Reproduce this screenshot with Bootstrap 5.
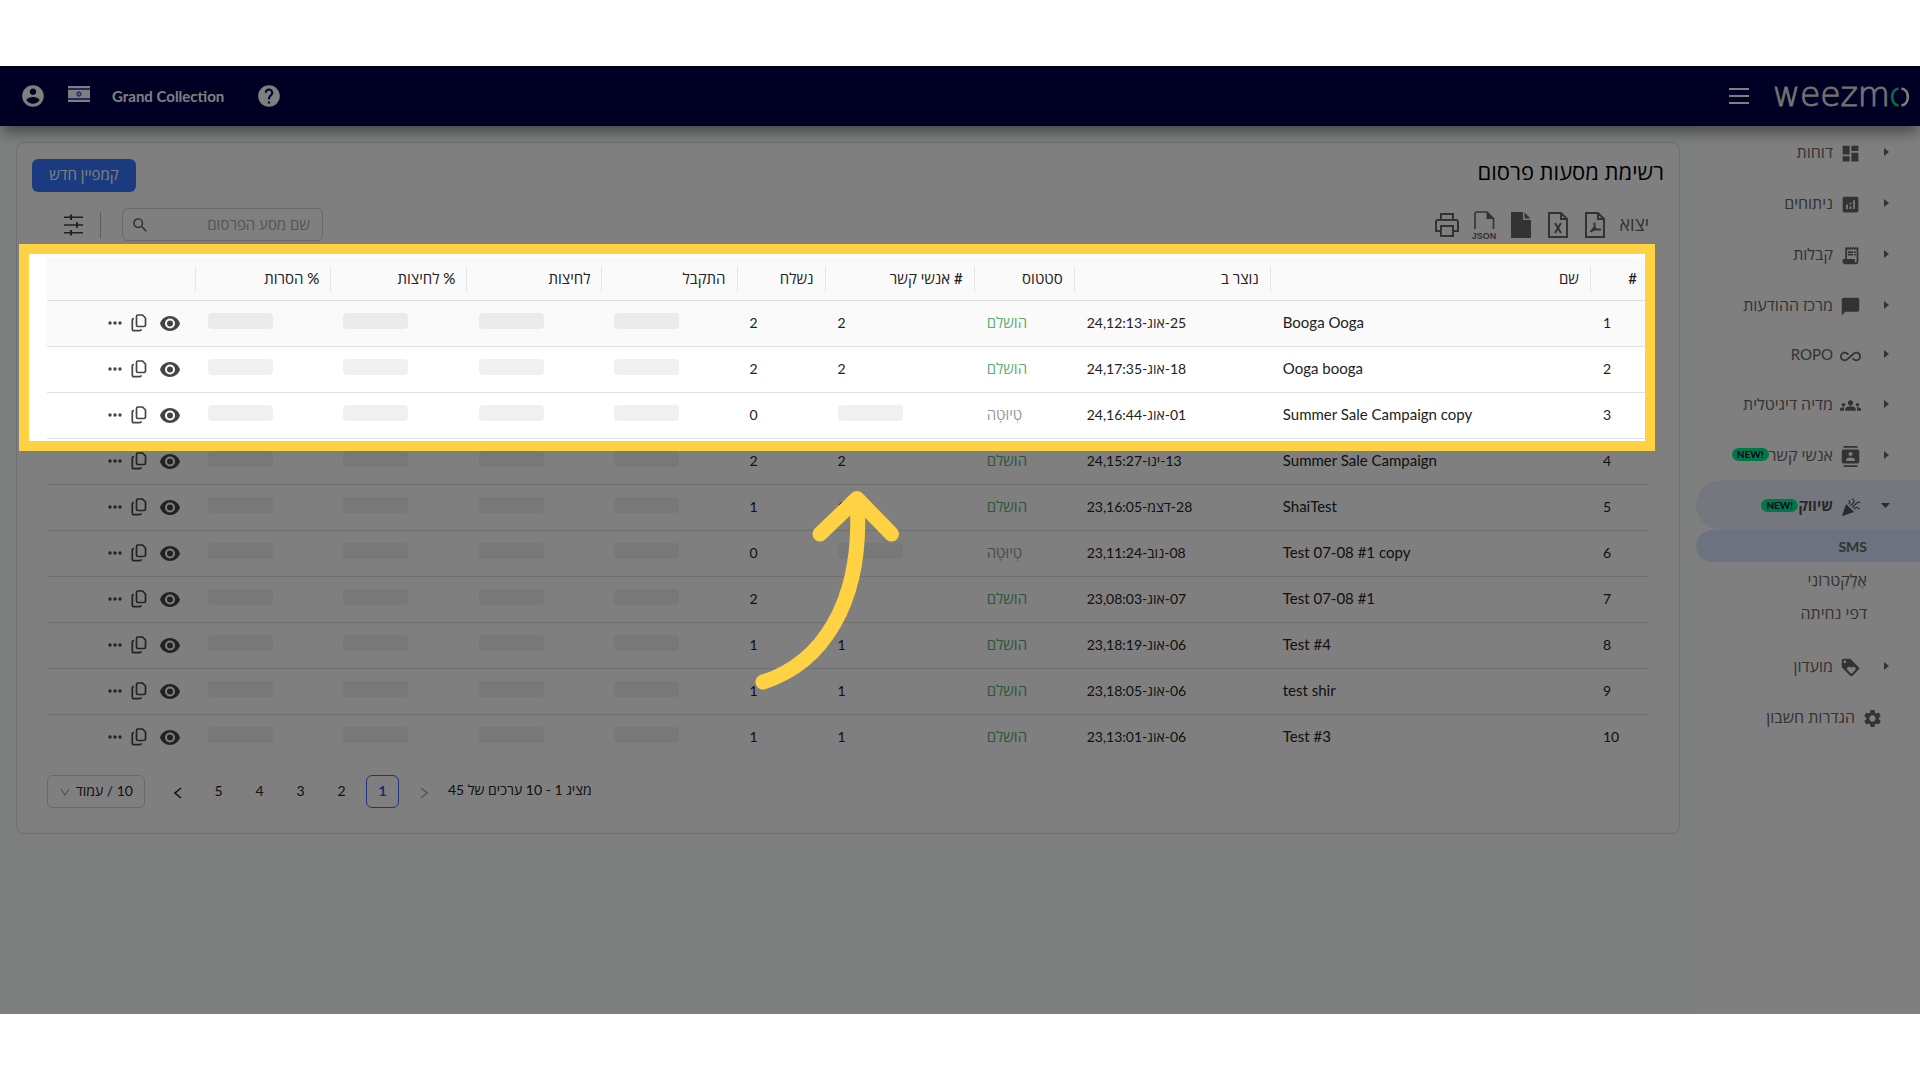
<!DOCTYPE html>
<html lang="he" dir="rtl">
<head>
<meta charset="utf-8">
<meta name="viewport" content="width=device-width, initial-scale=1">
<title>Weezmo – רשימת מסעות פרסום</title>
<link href="https://cdn.jsdelivr.net/npm/bootstrap@5.3.0/dist/css/bootstrap.min.css" rel="stylesheet">
<style>
  body { font-family: Lato, "Open Sans", "Liberation Sans", sans-serif; font-size: 14px; line-height: 21px; color: #222; background: #fff; padding: 66px 0; }
  a { color: inherit; text-decoration: none; }
  svg { display: block; fill: currentColor; flex: none; }
  .screen { position: relative; overflow: hidden; background: #f8fffb; }
  .topbar { height: 60px; background: #00004a; color: #fff; padding: 0 10px 0 20px; box-shadow: 0 8px 14px -2px rgba(0,0,0,.45); z-index: 2; position: relative; }
  .topbar .account { gap: 22px; }
  .topbar strong { font-size: 15px; line-height: 20px; padding-bottom: 1px; }
  .topbar .help { margin-left: 10px; }
  .brand { font-family: "DejaVu Sans", sans-serif; font-weight: 200; font-size: 33px; line-height: 40px; padding-bottom: 3px; -webkit-text-stroke: 1px #ddd; }
  .side { width: 224px; background: #fff; flex: none; }
  .side a { height: 51px; padding: 0 30px 0 0; color: #666; font-size: 16px; }
  .side .caret-slot { width: 29px; }
  .side a.low { height: 48px; font-size: 15px; }
  .side a.current { height: 50px; background: #e9f1fd; border-radius: 25px 0 0 25px; font-size: 15px; font-weight: 700; color: #555; }
  .side a.sub { height: 32px; margin-bottom: 1px; padding-right: 53px; border-radius: 16px 0 0 16px; }
  .side a.sub.picked { background: #d9e4ff; font-size: 14px; font-weight: 700; }
  .side a.sub.final { margin-bottom: 12px; }
  .side a.flat { padding-right: 37px; }
  .side .name-tag { margin-right: 7px; }
  .tag { background: #00f08a; color: #00004a; font: 700 10px/13px Lato, sans-serif; border-radius: 7px; padding: 0 5px; }
  .panel { border: 1px solid #d8dedb; border-radius: 8px; background: #fff; padding: 16px 15px 25px; }
  .panel h1 { font-size: 22px; line-height: 26px; margin: 0; color: #000; font-weight: 400; }
  .btn-new { background: #3476ff; color: #fff; font-size: 15px; line-height: 20px; height: 33px; width: 104px; padding: 0 0 3px; border-radius: 6px; }
  .icon-btn { border: 0; background: none; padding: 0; color: #444; }
  .tools { color: #666; }
  .tools .icon-btn { color: #666; width: 37px; }
  .tools .icon-btn svg { margin: 0 auto; }
  .tools .caption-text { font-size: 18px; margin-left: 6px; }
  .find { width: 201px; height: 33px; border: 1px solid #d0d0d0; border-radius: 6px; padding: 0 10px; }
  .find input { border: 0; outline: 0; width: 100%; min-width: 0; background: none; font-size: 15px; }
  .find input::placeholder { color: #aaa; }
  .split { width: 1px; height: 26px; background: #bbb; margin-right: 21px; }
  .filter { margin: 0 17px; }
  .inner { padding: 0 15px; }
  .grid { table-layout: fixed; width: 100%; border-collapse: separate; border-spacing: 0; }
  .grid th { height: 44px; padding: 0 12px; font-size: 15px; font-weight: 500; text-align: right; background: #fafafa; border-bottom: 1px solid #e0e0e0; position: relative; }
  .grid th + th::before { content: ""; position: absolute; right: 0; top: 9px; width: 1px; height: 26px; background: #e6e6e6; }
  .grid td { height: 46px; padding: 12px; line-height: 19px; text-align: left; vertical-align: top; border-bottom: 1px solid #e0e0e0; white-space: nowrap; }
  .grid td.title, .grid td.done, .grid td.draft { font-size: 15px; }
  .grid tbody tr:first-child td { background: #fafafa; }
  .grid tbody tr:last-child td { border-bottom: 0; }
  .blank { display: block; width: 65px; height: 16px; border-radius: 4px; background: rgba(0,0,0,.06); margin-right: auto; }
  .acts { padding-right: 4px; height: 20px; }
  .acts .copy-btn { margin: 0 13px 0 9px; }
  .done { color: #57b06e; }
  .draft { color: #999; }
  .spot { position: absolute; top: -3px; left: -18px; right: 4px; height: 187px; outline: 10px solid #ffd243; box-shadow: 0 0 0 4000px rgba(0,0,0,.5); z-index: 5; pointer-events: none; }
  .pointer { position: absolute; left: 44%; top: 230px; z-index: 6; pointer-events: none; }
  .pager { margin-top: 14px; gap: 8px; }
  .pager .info { padding-bottom: 4px; }
  .pager a { width: 33px; height: 33px; border-radius: 6px; padding-bottom: 2px; }
  .pager a.on { border: 1px solid #3b6cf6; color: #3454e8; font-weight: 700; }
  .pager select { width: 98px; height: 33px; border: 1px solid #d0d0d0; border-radius: 6px; appearance: none; padding: 0 11px 2px; margin-right: 8px; color: #222;
    background: #fff url("data:image/svg+xml,%3Csvg xmlns='http://www.w3.org/2000/svg' width='10' height='8' fill='none' stroke='%23aaa' stroke-width='1.3'%3E%3Cpath d='M1 1l4 6 4-6'/%3E%3C/svg%3E") no-repeat 12px 12px; }
</style>
<script src="https://cdn.jsdelivr.net/npm/bootstrap@5.3.0/dist/js/bootstrap.bundle.min.js"></script>
</head>
<body class="min-vh-100 d-flex flex-column">
<svg width="0" height="0" class="position-absolute" aria-hidden="true">
  <symbol id="eye" viewBox="0 0 20 15"><path fill-rule="evenodd" d="M10 0C5.500 0 1.600 2.800 0 7.500 1.600 12.200 5.500 15 10 15s8.400-2.800 10-7.500C18.400 2.800 14.500 0 10 0zM10 12.500a5 5 0 110-10 5 5 0 010 10zM10 4.500a3 3 0 100 6 3 3 0 000-6z"/></symbol>
  <symbol id="copy" viewBox="0 0 16 18"><path fill="none" stroke="currentColor" stroke-width="1.700" d="M7.500 1h4l3 3v7q0 1.500-1.500 1.500H7q-1.500 0-1.500-1.500V2.500Q5.500 1 7 1zM3 4.500q-1.700 0-1.700 1.500v9q0 1.700 1.700 1.700h5.500q1.700 0 1.700-1.500"/></symbol>
  <symbol id="dots" viewBox="0 0 14 4"><circle cx="2" cy="2" r="1.700"/><circle cx="7" cy="2" r="1.700"/><circle cx="12" cy="2" r="1.700"/></symbol>
  <symbol id="caret" viewBox="0 0 6 10"><path d="M0 1l5 4-5 4z"/></symbol>
</svg>
<div class="screen flex-grow-1 d-flex flex-column">
  <header class="topbar d-flex align-items-center justify-content-between">
    <div class="d-flex align-items-center" dir="ltr">
      <button class="icon-btn text-white me-4" aria-label="תפריט"><svg width="20" height="16" viewBox="0 0 20 16"><path d="M0 0h20v2H0zM0 7h20v2H0zM0 14h20v2H0z"/></svg></button>
      <a href="#" class="brand d-flex align-items-center">weezm<svg width="20" height="20" viewBox="0 0 20 20" class="mt-1" stroke-width="2.600"><path fill="none" stroke="#00e08a" d="M8.500 1.500C0 3 0 17 8.500 18.500"/><path fill="none" stroke="#fff" d="M11.500 1.500c8.500 1.500 8.500 15.500 0 17"/></svg></a>
    </div>
    <div class="account d-flex align-items-center" dir="ltr">
      <a href="#" aria-label="חשבון"><svg width="26" height="26" viewBox="0 0 24 24"><path d="M12 2C6.480 2 2 6.480 2 12s4.480 10 10 10 10-4.480 10-10S17.520 2 12 2zm0 3c1.660 0 3 1.340 3 3s-1.340 3-3 3-3-1.340-3-3 1.340-3 3-3zm0 14.200c-2.500 0-4.710-1.280-6-3.220.03-1.990 4-3.080 6-3.080 1.990 0 5.970 1.090 6 3.080-1.290 1.940-3.500 3.220-6 3.220z"/></svg></a>
      <svg class="mb-1" width="22" height="16" viewBox="0 0 22 16"><path fill="#fff" d="M0 0h22v16H0z"/><path fill="#3a55c8" d="M0 2h22v2H0zM0 12h22v2H0z"/><path fill="none" stroke="#3a55c8" stroke-width=".9" d="M11 5.200l2.300 4H8.700zM11 10.800l2.300-4H8.700z"/></svg>
      <strong>Grand Collection</strong>
      <a href="#" class="help" aria-label="עזרה"><svg width="26" height="26" viewBox="0 0 24 24"><path d="M12 2C6.480 2 2 6.480 2 12s4.480 10 10 10 10-4.480 10-10S17.520 2 12 2zm1 17h-2v-2h2v2zm2.070-7.750l-.9.920C13.450 12.900 13 13.500 13 15h-2v-.5c0-1.100.45-2.100 1.170-2.830l1.240-1.260c.37-.36.59-.86.59-1.410 0-1.100-.9-2-2-2s-2 .9-2 2H8c0-2.210 1.790-4 4-4s4 1.790 4 4c0 .88-.36 1.680-.93 2.250z"/></svg></a>
    </div>
  </header>
  <div class="d-flex flex-grow-1">
    <nav class="side d-flex flex-column" id="side"></nav>
    <main class="flex-grow-1 px-3 pt-3" style="min-width:0">
      <section class="panel">
        <div class="d-flex align-items-start justify-content-between">
          <h1>רשימת מסעות פרסום</h1>
          <button class="btn btn-new">קמפיין חדש</button>
        </div>
        <div class="inner d-flex align-items-center justify-content-between my-3">
          <div class="tools d-flex align-items-center">
            <span class="caption-text">יצוא</span>
            <button class="icon-btn" aria-label="PDF"><svg width="22" height="28" viewBox="0 0 22 28" stroke="currentColor" stroke-width="2"><path fill="none" d="M2 2h12l6 6v18H2zM14 2v6h6M10.500 11.500v4.500L6.500 21M10.500 16l2 2.500h4.500M6.500 20l5-1.500"/></svg></button>
            <button class="icon-btn" aria-label="Excel"><svg width="22" height="28" viewBox="0 0 22 28" stroke="currentColor" stroke-width="2"><path fill="none" d="M2 2h12l6 6v18H2zM14 2v6h6M8 12l6 10M14 12L8 22"/></svg></button>
            <button class="icon-btn" aria-label="CSV"><svg width="22" height="28" viewBox="0 0 22 28"><path d="M1 1h12v8h8v18H1zM14.500 1.500v6h6z"/></svg></button>
            <button class="icon-btn" aria-label="JSON"><svg width="24" height="28" viewBox="0 0 24 28"><path fill="none" stroke="currentColor" stroke-width="1.600" d="M3 18V3q0-2 2-2h10l6.500 6.500V18"/><path d="M14.500 1v7H22z"/><text x="12" y="27.500" direction="ltr" text-anchor="middle" font-family="Liberation Sans" font-size="9" font-weight="700">JSON</text></svg></button>
            <button class="icon-btn" aria-label="הדפסה"><svg width="26" height="26" viewBox="0 0 26 26" stroke="currentColor" stroke-width="2"><path fill="none" d="M7 8V2h12v6M7 19H2V10q0-2 2-2h18q2 0 2 2v9h-5M7 14h12v10H7z"/></svg></button>
          </div>
          <div class="d-flex align-items-center">
            <label class="find d-flex align-items-center" for="q"><input id="q" type="search" placeholder="שם מסע הפרסום" aria-label="שם מסע הפרסום"><svg width="14" height="14" viewBox="0 0 14 14"><path fill="none" stroke="#555" stroke-width="1.400" d="M9.500 5.200a4.300 4.300 0 11-8.600 0 4.300 4.300 0 018.600 0zM8.300 8.300L13.300 13.300"/></svg></label>
            <span class="split"></span>
            <button class="icon-btn filter" aria-label="סינון"><svg width="19" height="22" viewBox="0 0 19 22"><path d="M0 2.500h19v1.600H0zM0 10.200h19v1.600H0zM0 18h19v1.600H0zM6 .6h2v5.400H6zM12 8.300h2v5.400h-2zM6 16h2v5.400H6z"/></svg></button>
          </div>
        </div>
        <div class="inner">
          <div class="position-relative">
            <table class="grid">
              <colgroup><col style="width:58px"><col style="width:320px"><col style="width:196px"><col style="width:100px"><col style="width:149px"><col style="width:88px"><col style="width:135px"><col style="width:135px"><col style="width:136px"><col style="width:135px"><col style="width:149px"></colgroup>
              <thead><tr><th>#</th><th>שם</th><th>נוצר ב</th><th>סטטוס</th><th># אנשי קשר</th><th>נשלח</th><th>התקבל</th><th>לחיצות</th><th>% לחיצות</th><th>% הסרות</th><th></th></tr></thead>
              <tbody id="rows"></tbody>
            </table>
            <div class="spot"></div>
            <svg class="pointer" width="150" height="210" viewBox="752 487 150 210" stroke="#ffd243" stroke-width="15" stroke-linecap="round" stroke-linejoin="round"><path fill="none" d="M763 682C820 664 864 605 857 500M820 534l37-35.500L891.500 534"/></svg>
          </div>
          <div class="pager d-flex align-items-center justify-content-end">
            <span class="info">מציג 1 - 10 ערכים של 45</span>
            <a href="#" class="d-flex align-items-center justify-content-center" aria-label="הקודם"><svg width="8" height="12" viewBox="0 0 8 12" class="mt-1"><path fill="none" stroke="#aaa" stroke-width="1.500" d="M1 1l6 5-6 5"/></svg></a>
            <a href="#" class="on d-flex align-items-center justify-content-center">1</a>
            <a href="#" class="d-flex align-items-center justify-content-center">2</a>
            <a href="#" class="d-flex align-items-center justify-content-center">3</a>
            <a href="#" class="d-flex align-items-center justify-content-center">4</a>
            <a href="#" class="d-flex align-items-center justify-content-center">5</a>
            <a href="#" class="d-flex align-items-center justify-content-center" aria-label="הבא"><svg width="8" height="12" viewBox="0 0 8 12" class="mt-1"><path fill="none" stroke="#222" stroke-width="1.500" d="M7 1L1 6l6 5"/></svg></a>
            <select aria-label="שורות בעמוד"><option>10 / עמוד</option><option>20 / עמוד</option></select>
          </div>
        </div>
      </section>
    </main>
  </div>
</div>
<script>
  const menu = [
    ['דוחות', 'M3 13h8V3H3v10zm0 8h8v-6H3v6zm10 0h8V11h-8v10zm0-18v6h8V3h-8z'],
    ['ניתוחים', 'M19 3H5c-1.100 0-2 .9-2 2v14c0 1.100.9 2 2 2h14c1.100 0 2-.9 2-2V5c0-1.100-.9-2-2-2zM9 17H7v-5h2v5zm4 0h-2v-3h2v3zm0-5h-2v-2h2v2zm4 5h-2V7h2v10z'],
    ['קבלות', 'M19.500 3.500L18 2l-1.500 1.500L15 2l-1.500 1.500L12 2l-1.500 1.500L9 2 7.500 3.500 6 2v14H3v3c0 1.660 1.340 3 3 3h12c1.660 0 3-1.340 3-3V2l-1.500 1.500zM19 19c0 .55-.45 1-1 1s-1-.45-1-1v-3H8V5h11v14zM9 7h6v2H9zM16 7h2v2h-2zM9 10h6v2H9zM16 10h2v2h-2z'],
    ['מרכז ההודעות', 'M20 2H4c-1.100 0-2 .9-2 2v18l4-4h14c1.100 0 2-.9 2-2V4c0-1.100-.9-2-2-2z'],
    ['ROPO', 'M18.600 6.620c-1.440 0-2.800.56-3.770 1.530L12 10.660 10.480 12h.01L7.800 14.390c-.64.64-1.490.99-2.400.99-1.870 0-3.390-1.510-3.390-3.380S3.530 8.620 5.400 8.620c.91 0 1.760.35 2.440 1.030l1.130 1 1.510-1.340L9.220 8.200C8.200 7.180 6.840 6.620 5.400 6.620 2.420 6.620 0 9.040 0 12s2.420 5.380 5.400 5.380c1.440 0 2.800-.56 3.770-1.530l2.830-2.500.01.01L13.520 12h-.01l2.690-2.390c.64-.64 1.490-.99 2.400-.99 1.870 0 3.390 1.510 3.390 3.380s-1.520 3.380-3.390 3.380c-.9 0-1.760-.35-2.440-1.030l-1.140-1.010-1.510 1.340 1.270 1.120c1.020 1.010 2.370 1.570 3.820 1.570 2.980 0 5.400-2.410 5.400-5.380s-2.420-5.370-5.400-5.370z', 'low'],
    ['מדיה דיגיטלית', 'M12 12.750c1.630 0 3.070.39 4.240.9 1.080.48 1.760 1.560 1.760 2.730V18H6v-1.610c0-1.180.68-2.260 1.760-2.730 1.170-.52 2.610-.91 4.240-.91zM4 13c1.100 0 2-.9 2-2s-.9-2-2-2-2 .9-2 2 .9 2 2 2zm1.130 1.100c-.37-.06-.74-.1-1.130-.1-.99 0-1.930.21-2.780.58C.48 14.900 0 15.620 0 16.430V18h4.500v-1.610c0-.83.23-1.610.63-2.290zM20 13c1.100 0 2-.9 2-2s-.9-2-2-2-2 .9-2 2 .9 2 2 2zm4 3.430c0-.81-.48-1.530-1.220-1.850-.85-.37-1.790-.58-2.780-.58-.39 0-.76.04-1.130.1.4.68.63 1.460.63 2.290V18H24v-1.570zM12 6c1.660 0 3 1.340 3 3s-1.340 3-3 3-3-1.340-3-3 1.340-3 3-3z'],
    ['אנשי קשר', 'M20 0H4v2h16V0zM4 24h16v-2H4v2zM20 4H4c-1.100 0-2 .9-2 2v12c0 1.100.9 2 2 2h16c1.100 0 2-.9 2-2V6c0-1.100-.9-2-2-2zm-8 2.750c1.240 0 2.250 1.010 2.250 2.250s-1.010 2.250-2.250 2.250S9.750 10.240 9.750 9 10.760 6.750 12 6.750zM17 17H7v-1.500c0-1.670 3.330-2.500 5-2.500s5 .83 5 2.500V17z', 'new'],
    ['שיווק', 'M2 22l14-5-9-9zM14.530 12.530l5.590-5.590c.49-.49 1.280-.49 1.770 0l.59.59 1.060-1.060-.59-.59c-1.070-1.070-2.820-1.070-3.890 0l-5.590 5.590 1.060 1.060zM10.060 6.880l-.59.59 1.060 1.060.59-.59c1.070-1.070 1.070-2.820 0-3.890l-.59-.59-1.060 1.070.59.59c.48.48.48 1.280 0 1.760zM17.060 11.880l-1.590 1.590 1.060 1.060 1.590-1.590c.49-.49 1.280-.49 1.770 0l1.610 1.610 1.060-1.060-1.610-1.610c-1.080-1.070-2.820-1.070-3.890 0zM15.060 5.880l-3.590 3.590 1.060 1.060 3.590-3.590c1.070-1.070 1.070-2.820 0-3.890l-1.590-1.590-1.060 1.060 1.590 1.590c.48.49.48 1.290 0 1.770z', 'current new'],
    ['SMS', '', 'sub picked'], ['אֶלֶקטרוֹנִי', '', 'sub'], ['דפי נחיתה', '', 'sub final'],
    ['מועדון', 'M21.410 11.580l-9-9C12.050 2.220 11.550 2 11 2H4c-1.100 0-2 .9-2 2v7c0 .55.22 1.050.59 1.420l9 9c.36.36.86.58 1.410.58.55 0 1.050-.22 1.410-.59l7-7c.37-.36.59-.86.59-1.410 0-.55-.23-1.060-.59-1.420zM5.500 7C4.670 7 4 6.330 4 5.500S4.670 4 5.500 4 7 4.670 7 5.500 6.330 7 5.500 7zm11.770 8.270L13 19.540l-4.270-4.270C8.280 14.810 8 14.190 8 13.500c0-1.380 1.120-2.500 2.500-2.500.69 0 1.320.28 1.770.74l.73.72.73-.73c.45-.45 1.080-.73 1.770-.73 1.380 0 2.500 1.120 2.500 2.500 0 .69-.28 1.320-.73 1.770z'],
    ['הגדרות חשבון', 'M19.140 12.940c.04-.3.06-.61.06-.94 0-.32-.02-.64-.07-.94l2.030-1.580c.18-.14.23-.41.12-.61l-1.920-3.320c-.12-.22-.37-.29-.59-.22l-2.390.96c-.5-.38-1.030-.7-1.620-.94l-.36-2.540c-.04-.24-.24-.41-.48-.41h-3.840c-.24 0-.43.17-.47.41l-.36 2.540c-.59.24-1.130.57-1.620.94l-2.390-.96c-.22-.08-.47 0-.59.22L2.740 8.870c-.12.21-.08.47.12.61l2.030 1.580c-.05.3-.09.63-.09.94s.02.64.07.94l-2.030 1.580c-.18.14-.23.41-.12.61l1.920 3.320c.12.22.37.29.59.22l2.390-.96c.5.38 1.030.7 1.620.94l.36 2.540c.05.24.24.41.48.41h3.840c.24 0 .44-.17.47-.41l.36-2.540c.59-.24 1.130-.56 1.620-.94l2.390.96c.22.08.47 0 .59-.22l1.920-3.320c.12-.22.07-.47-.12-.61l-2.010-1.580zM12 15.600c-1.980 0-3.600-1.620-3.600-3.600s1.620-3.600 3.600-3.600 3.600 1.620 3.600 3.600-1.620 3.600-3.600 3.600z', 'flat']
  ];
  document.getElementById('side').innerHTML = menu.map(([label, path, cls = '']) => {
    const sub = cls.includes('sub'), flat = cls.includes('flat');
    const caret = cls.includes('current') ? '<svg width="9" height="5" viewBox="0 0 9 5"><path d="M0 0h9L4.500 5z"/></svg>' : '<svg width="6" height="10"><use href="#caret"/></svg>';
    return `<a href="#" class="d-flex align-items-center ${cls}">` +
      (sub || flat ? '' : `<span class="caret-slot">${caret}</span>`) +
      (sub ? '' : `<svg class="mt-1" width="21" height="21" viewBox="0 0 24 24"><path fill-rule="evenodd" d="${path}"/></svg>`) +
      `<span class="${sub ? '' : 'name-tag'}">${label}</span>` + (cls.includes('new') ? '<span class="tag" dir="ltr">NEW!</span>' : '') + '</a>';
  }).join('');

  const blank = '<span class="blank"></span>';
  const data = [
    ['Booga Ooga', '25-אוג-24,12:13', 1, 2, 2], ['Ooga booga', '18-אוג-24,17:35', 1, 2, 2],
    ['Summer Sale Campaign copy', '01-אוג-24,16:44', 0, blank, 0], ['Summer Sale Campaign', '13-ינו-24,15:27', 1, 2, 2],
    ['ShaiTest', '28-דצמ-23,16:05', 1, 1, 1], ['Test 07-08 #1 copy', '08-נוב-23,11:24', 0, blank, 0],
    ['Test 07-08 #1', '07-אוג-23,08:03', 1, 2, 2], ['Test #4', '06-אוג-23,18:19', 1, 1, 1],
    ['test shir', '06-אוג-23,18:05', 1, 1, 1], ['Test #3', '06-אוג-23,13:01', 1, 1, 1]
  ];
  document.getElementById('rows').innerHTML = data.map(([name, date, done, people, sent], i) =>
    `<tr><td>${i + 1}</td><td class="title" dir="ltr">${name}</td><td>${date}</td><td class="${done ? 'done' : 'draft'}">${done ? 'הושלם' : 'טְיוּטָה'}</td><td>${people}</td><td>${sent}</td>` +
    `<td>${blank}</td>`.repeat(4) +
    `<td><div class="acts d-flex align-items-center"><button class="icon-btn" aria-label="צפייה"><svg width="20" height="15"><use href="#eye"/></svg></button><button class="icon-btn copy-btn" aria-label="שכפול"><svg width="16" height="18"><use href="#copy"/></svg></button><button class="icon-btn" aria-label="עוד"><svg width="14" height="4"><use href="#dots"/></svg></button></div></td></tr>`
  ).join('');
</script>
</body>
</html>
